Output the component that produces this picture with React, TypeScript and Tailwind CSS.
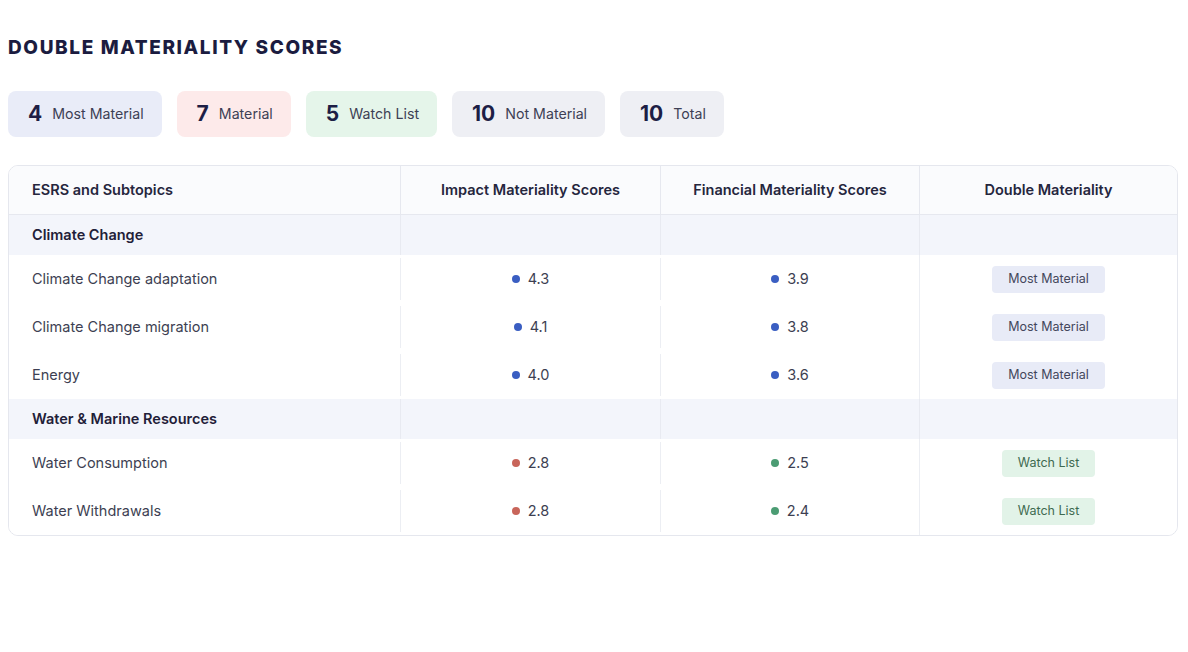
import React from "react"

type Level = "most" | "watch"
type Tone = "blue" | "red" | "green"

interface Row {
  name: string
  impact: [number, Tone]
  financial: [number, Tone]
  level: Level
}

interface Group {
  title: string
  rows: Row[]
}

const summary = [
  { value: "4", label: "Most Material", bg: "bg-[#e9ecf8]" },
  { value: "7", label: "Material", bg: "bg-[#fdeaea]" },
  { value: "5", label: "Watch List", bg: "bg-[#e5f5ea]" },
  { value: "10", label: "Not Material", bg: "bg-[#eeeff4]" },
  { value: "10", label: "Total", bg: "bg-[#eeeff4]" },
]

const groups: Group[] = [
  {
    title: "Climate Change",
    rows: [
      { name: "Climate Change adaptation", impact: [4.3, "blue"], financial: [3.9, "blue"], level: "most" },
      { name: "Climate Change migration", impact: [4.1, "blue"], financial: [3.8, "blue"], level: "most" },
      { name: "Energy", impact: [4.0, "blue"], financial: [3.6, "blue"], level: "most" },
    ],
  },
  {
    title: "Water & Marine Resources",
    rows: [
      { name: "Water Consumption", impact: [2.8, "red"], financial: [2.5, "green"], level: "watch" },
      { name: "Water Withdrawals", impact: [2.8, "red"], financial: [2.4, "green"], level: "watch" },
    ],
  },
]

const dot: Record<Tone, string> = {
  blue: "bg-[#3a5ec2]",
  red: "bg-[#c8655a]",
  green: "bg-[#4b9c73]",
}

function Score({ value }: { value: [number, Tone] }) {
  return (
    <div className="flex items-center justify-center gap-[8px] text-[14.5px] text-[#3d3f52]">
      <span className={`h-[8px] w-[8px] rounded-full ${dot[value[1]]}`} />
      <span>{value[0].toFixed(1)}</span>
    </div>
  )
}

function Badge({ level }: { level: Level }) {
  if (level === "most") {
    return (
      <span className="inline-flex h-[27px] items-center rounded-[4px] bg-[#e8ebf7] px-[16px] text-[12.5px] text-[#44475c]">
        Most Material
      </span>
    )
  }
  return (
    <span className="inline-flex h-[27px] items-center rounded-[4px] bg-[#e2f3e8] px-[16px] text-[12.5px] text-[#3e6a50]">
      Watch List
    </span>
  )
}

const cols = "grid grid-cols-[391px_260px_259px_1fr]"

export default function App() {
  return (
    <div className="min-h-[652px] w-full bg-white px-[8px] pt-[36px] font-['Inter',sans-serif] text-[#1e1f3d]">
      <h1 className="text-[19px] font-extrabold uppercase tracking-[0.085em] text-[#1b1c40] leading-[24px]">
        Double Materiality Scores
      </h1>

      <div className="mt-[31px] flex gap-[15px]">
        {summary.map((s) => (
          <div key={s.label} className={`flex h-[46px] items-center gap-[10px] rounded-[8px] pl-[20px] pr-[18px] ${s.bg}`}>
            <span className="text-[21px] font-bold text-[#1d1e45]">{s.value}</span>
            <span className="text-[14.2px] text-[#3d3f55]">{s.label}</span>
          </div>
        ))}
      </div>

      <div className="mt-[28px] w-[1170px] overflow-hidden rounded-[10px] border border-[#e5e7ee]">
        <div className={`${cols} h-[49px] border-b border-[#e6e8ef] bg-[#fafbfd] text-[14.5px] font-semibold text-[#25263d]`}>
          <div className="flex items-center px-[23px]">ESRS and Subtopics</div>
          <div className="flex items-center justify-center border-l border-[#e6e8ef]">Impact Materiality Scores</div>
          <div className="flex items-center justify-center border-l border-[#e6e8ef]">Financial Materiality Scores</div>
          <div className="flex items-center justify-center border-l border-[#e6e8ef]">Double Materiality</div>
        </div>

        {groups.map((g) => (
          <React.Fragment key={g.title}>
            <div className={`${cols} h-[40px] bg-[#f3f5fb] text-[14.5px] font-semibold text-[#1f2038]`}>
              <div className="flex items-center px-[23px]">{g.title}</div>
              <div className="border-l border-[#e8eaf1]" />
              <div className="border-l border-[#e8eaf1]" />
              <div className="border-l border-[#e8eaf1]" />
            </div>
            {g.rows.map((r) => (
              <div key={r.name} className={`${cols} h-[48px] bg-white`}>
                <div className="flex items-center px-[23px] text-[14.5px] text-[#3d3f52]">{r.name}</div>
                <div className="my-[3px] flex items-center justify-center border-l border-[#eceef3]">
                  <Score value={r.impact} />
                </div>
                <div className="my-[3px] flex items-center justify-center border-l border-[#eceef3]">
                  <Score value={r.financial} />
                </div>
                <div className="flex items-center justify-center border-l border-[#eceef3]">
                  <Badge level={r.level} />
                </div>
              </div>
            ))}
          </React.Fragment>
        ))}
      </div>
    </div>
  )
}
